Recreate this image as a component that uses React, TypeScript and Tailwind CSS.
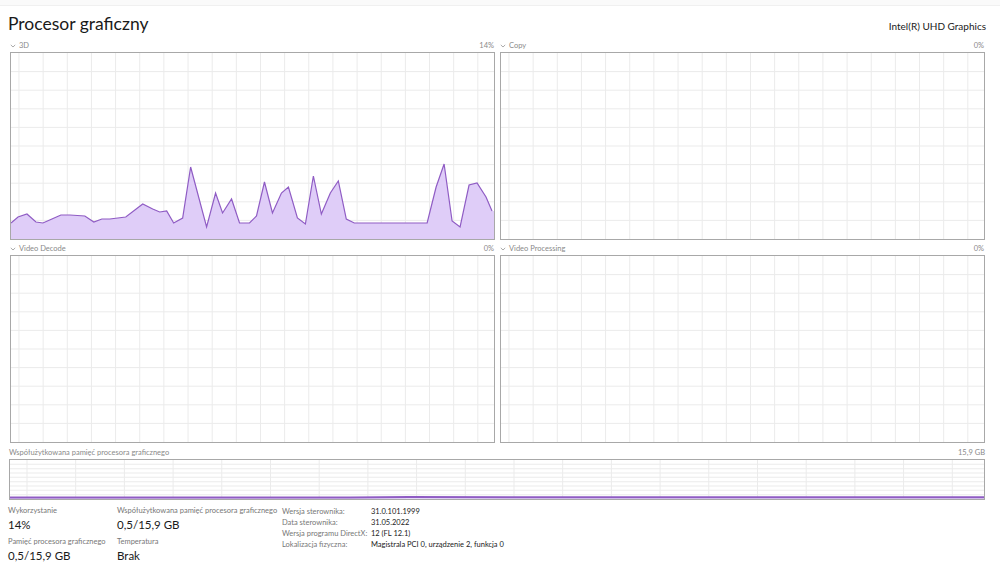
import React from "react";

const PTS_3D: [number, number][] = [
  [0, 170], [7, 164], [16, 161], [25, 169], [32, 170], [41, 166], [50, 162], [59, 162], [74, 163],
  [83, 169], [91, 166], [99, 166], [115, 164], [132, 151], [142, 156], [149, 159], [156, 158],
  [163, 170], [172, 165], [180, 114], [196, 174], [205, 140], [212, 160], [221, 146], [229, 170],
  [239, 170], [246, 163], [254, 129], [262, 160], [271, 140], [278, 134], [287, 165], [295, 171],
  [303, 123], [311, 161], [320, 140], [328, 128], [336, 166], [344, 170], [356, 170], [386, 170],
  [402, 170], [417, 170], [426, 134], [434, 111], [442, 168], [450, 174], [459, 132], [467, 130],
  [476, 144], [482, 158],
];

function Chevron() {
  return (
    <svg width="6" height="4" viewBox="0 0 6 4" className="mr-[3px]">
      <path d="M0.8 0.9 L3 3 L5.2 0.9" fill="none" stroke="#a0a0a0" strokeWidth="0.9" />
    </svg>
  );
}

function Grid({ w, h, cols, rows, offset }: { w: number; h: number; cols: number; rows: number; offset: number }) {
  const v: number[] = [];
  for (let x = offset; x < w; x += w / cols) v.push(x);
  const hz: number[] = [];
  for (let i = 1; i < rows; i++) hz.push((h / rows) * i);
  return (
    <g stroke="#ebebeb" strokeWidth="1">
      {v.map((x) => (
        <line key={"v" + x} x1={x} y1={0} x2={x} y2={h} vectorEffect="non-scaling-stroke" />
      ))}
      {hz.map((y) => (
        <line key={"h" + y} x1={0} y1={y} x2={w} y2={y} vectorEffect="non-scaling-stroke" />
      ))}
    </g>
  );
}

function Chart({ label, value, points }: { label: string; value: string; points?: [number, number][] }) {
  const W = 484;
  const H = 186;
  const line = points ? points.map((p) => p.join(",")).join(" ") : "";
  return (
    <div className="flex flex-col">
      <div className="flex h-[13px] items-center justify-between whitespace-nowrap text-[7.5px] text-[#8a8a8a]">
        <div className="flex items-center">
          <Chevron />
          <span>{label}</span>
        </div>
        <span className="pr-[1px]">{value}</span>
      </div>
      <div className="h-[188px] border border-[#a8a8a8] bg-white">
        <svg className="block h-full w-full" viewBox={`0 0 ${W} ${H}`} preserveAspectRatio="none">
          <Grid w={W} h={H} cols={20} rows={10} offset={8} />
          {points && (
            <>
              <polygon points={`0,${H} ${line} ${W},${points[points.length - 1][1]} ${W},${H}`} fill="#dfcdf8" />
              <polyline points={line} fill="none" stroke="#8f5cc4" strokeWidth="1.2" vectorEffect="non-scaling-stroke" />
            </>
          )}
        </svg>
      </div>
    </div>
  );
}

function SharedMemory() {
  const W = 975;
  const H = 39;
  return (
    <div className="flex flex-col pl-[9px] pr-[15px]">
      <div className="flex h-[13px] items-center justify-between whitespace-nowrap text-[7.5px] text-[#8a8a8a]">
        <span>Współużytkowana pamięć procesora graficznego</span>
        <span>15,9 GB</span>
      </div>
      <div className="h-[41px] border border-[#a8a8a8] bg-white">
        <svg className="block h-full w-full" viewBox={`0 0 ${W} ${H}`} preserveAspectRatio="none">
          <Grid w={W} h={H} cols={20} rows={9} offset={17} />
          <polygon points={`0,${H} 0,37.6 ${W},37.6 ${W},${H}`} fill="#e6d8f8" />
          <polyline points={`0,37.6 340,37.4 400,37.1 ${W},37.3`} fill="none" stroke="#8f5cc4" strokeWidth="2" vectorEffect="non-scaling-stroke" />
        </svg>
      </div>
    </div>
  );
}

function Stat({ label, value }: { label: string; value: string }) {
  return (
    <div className="flex flex-col whitespace-nowrap">
      <span className="text-[7.5px] leading-[10px] text-[#777]">{label}</span>
      <span className="text-[11.5px] leading-[17px] text-[#1a1a1a]">{value}</span>
    </div>
  );
}

const DETAILS = [
  ["Wersja sterownika:", "31.0.101.1999"],
  ["Data sterownika:", "31.05.2022"],
  ["Wersja programu DirectX:", "12 (FL 12.1)"],
  ["Lokalizacja fizyczna:", "Magistrala PCI 0, urządzenie 2, funkcja 0"],
];

export default function App() {
  return (
    <div
      className="h-[568px] w-[1000px] overflow-hidden bg-white"
      style={{ fontFamily: 'Lato, "Open Sans", sans-serif' }}
    >
      <div className="h-[6px] border-b border-[#f0f0f0] bg-[#fafafa]" />
      <div className="flex h-[33px] items-end justify-between pb-[3px] pl-[8px] pr-[14px]">
        <h1 className="text-[17.5px] leading-[24px] text-[#1a1a1a]">Procesor graficzny</h1>
        <span className="pb-[2px] text-[10px] text-[#1a1a1a]">Intel(R) UHD Graphics</span>
      </div>

      <div className="grid grid-cols-2 gap-x-[5px] gap-y-[2px] pl-[10px] pr-[15px]">
        <Chart label="3D" value="14%" points={PTS_3D} />
        <Chart label="Copy" value="0%" />
        <Chart label="Video Decode" value="0%" />
        <Chart label="Video Processing" value="0%" />
      </div>

      <div className="mt-[3px]">
        <SharedMemory />
      </div>

      <div className="mt-[6px] flex items-start pl-[8px]">
        <div className="flex w-[109px] flex-col gap-[4px]">
          <Stat label="Wykorzystanie" value="14%" />
          <Stat label="Pamięć procesora graficznego" value="0,5/15,9 GB" />
        </div>
        <div className="flex w-[165px] flex-col gap-[4px]">
          <Stat label="Współużytkowana pamięć procesora graficznego" value="0,5/15,9 GB" />
          <Stat label="Temperatura" value="Brak" />
        </div>
        <div className="grid grid-cols-[89px_auto] whitespace-nowrap text-[7.5px] leading-[11px]">
          {DETAILS.map(([k, v]) => (
            <React.Fragment key={k}>
              <span className="text-[#777]">{k}</span>
              <span className="text-[#1a1a1a]">{v}</span>
            </React.Fragment>
          ))}
        </div>
      </div>
    </div>
  );
}
